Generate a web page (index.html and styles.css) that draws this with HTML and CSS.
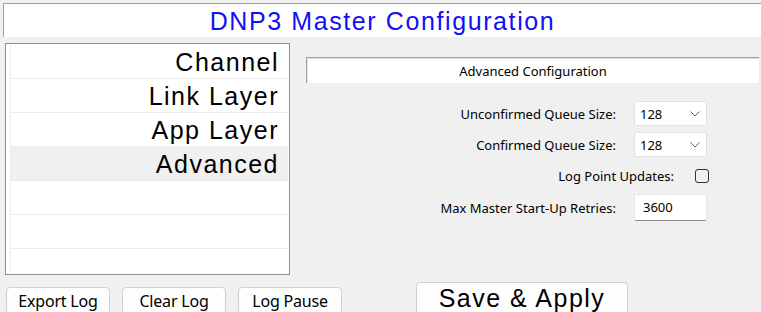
FILE: index.html
```html
<!DOCTYPE html>
<html lang="en">
<head>
    <meta charset="UTF-8">
    <meta name="viewport" content="width=device-width, initial-scale=1.0">
    <title>DNP3 Master Configuration</title>
    <link rel="stylesheet" href="styles.css">
</head>
<body>
    <div class="title-bar">DNP3 Master Configuration</div>
    <div class="content">
        <div class="nav-list">
            <div class="nav-item">Channel</div>
            <div class="nav-item">Link Layer</div>
            <div class="nav-item">App Layer</div>
            <div class="nav-item selected">Advanced</div>
            <div class="nav-item"></div>
            <div class="nav-item"></div>
            <div class="nav-item"></div>
        </div>
        <div class="config-panel">
            <div class="section-header">Advanced Configuration</div>
            <div class="form">
                <div class="form-row">
                    <label>Unconfirmed Queue Size:</label>
                    <div class="select"><span>128</span>
                        <svg width="10" height="6" viewBox="0 0 10 6"><path d="M0.5 0.5 L5 5 L9.5 0.5" fill="none" stroke="#606060" stroke-width="1"/></svg>
                    </div>
                </div>
                <div class="form-row">
                    <label>Confirmed Queue Size:</label>
                    <div class="select"><span>128</span>
                        <svg width="10" height="6" viewBox="0 0 10 6"><path d="M0.5 0.5 L5 5 L9.5 0.5" fill="none" stroke="#606060" stroke-width="1"/></svg>
                    </div>
                </div>
                <div class="form-row check-row">
                    <label>Log Point Updates:</label>
                    <div class="checkbox"></div>
                </div>
                <div class="form-row">
                    <label>Max Master Start-Up Retries:</label>
                    <div class="text-input">3600</div>
                </div>
            </div>
        </div>
    </div>
    <div class="actions">
        <button class="small-btn">Export Log</button>
        <button class="small-btn">Clear Log</button>
        <button class="small-btn">Log Pause</button>
        <button class="save-btn">Save &amp; Apply</button>
    </div>
</body>
</html>
```

FILE: styles.css
```css
body {
    margin: 0;
    width: 761px;
    height: 312px;
    overflow: hidden;
    background-color: #f0f0f0;
    font-family: "Noto Sans", sans-serif;
    font-size: 13px;
    color: #000;
}
.title-bar {
    margin: 3px 0 0 3px;
    height: 34px;
    line-height: 34px;
    box-sizing: border-box;
    border-top: 1px solid #a0a0a0;
    border-left: 1px solid #a0a0a0;
    background-color: #fff;
    text-align: center;
    font-family: "Liberation Sans", Arial, sans-serif;
    font-size: 25px;
    letter-spacing: 1.6px;
    color: #1010f5;
}
.content {
    display: flex;
    margin-top: 6px;
}
.nav-list {
    margin-left: 5px;
    width: 285px;
    height: 232px;
    box-sizing: border-box;
    border: 1px solid #8e9096;
    background-color: #fff;
    padding: 1px 1px 0 4px;
    overflow: hidden;
}
.nav-item {
    height: 33px;
    line-height: 34px;
    border-left: 1px solid #ececec;
    border-bottom: 1px solid #ececec;
    padding-right: 9px;
    text-align: right;
    font-family: "Liberation Sans", Arial, sans-serif;
    font-size: 25px;
    letter-spacing: 1.5px;
}
.nav-item.selected {
    background-color: #f0f0f0;
}
.config-panel {
    flex: 1;
    margin-left: 16px;
    padding-top: 14px;
}
.section-header {
    height: 26px;
    line-height: 26px;
    box-sizing: border-box;
    border-top: 1px solid #a0a0a0;
    border-left: 1px solid #a0a0a0;
    box-shadow: inset 1px 1px 0 #e3e3e3;
    background-color: #fff;
    margin-right: 2px;
    text-align: center;
}
.form {
    display: flex;
    flex-direction: column;
    gap: 6px;
    margin-top: 18px;
    padding-right: 54px;
}
.form-row {
    display: flex;
    justify-content: flex-end;
    align-items: center;
    gap: 18px;
    height: 25px;
}
.form-row label {
    white-space: nowrap;
}
.select {
    width: 73px;
    height: 25px;
    box-sizing: border-box;
    border: 1px solid #e2e2e2;
    border-radius: 2px;
    background-color: #fff;
    display: flex;
    align-items: center;
    justify-content: space-between;
    padding: 0 6px 0 5px;
}
.check-row {
    gap: 21px;
    height: 26px;
    margin-right: -2px;
}
.checkbox {
    width: 14px;
    height: 14px;
    box-sizing: border-box;
    border: 1px solid #333;
    border-radius: 3px;
}
.text-input {
    width: 73px;
    height: 27px;
    box-sizing: border-box;
    border: 1px solid #e6e6e6;
    border-bottom: 1px solid #8a8a8a;
    border-radius: 2px;
    background-color: #fff;
    padding: 3px 0 0 8px;
}
.actions {
    display: flex;
    align-items: flex-start;
    margin-top: 7px;
    padding-left: 6px;
}
button {
    cursor: pointer;
    background-color: #fdfdfd;
    border: 1px solid #d0d0d0;
    border-radius: 4px;
    color: #000;
}
.small-btn {
    width: 104px;
    height: 27px;
    margin-top: 5px;
    margin-right: 12px;
    padding: 0;
    font-family: "Noto Sans", sans-serif;
    font-size: 16px;
    letter-spacing: -0.2px;
}
.save-btn {
    width: 212px;
    height: 36px;
    margin-left: 62px;
    padding: 0 0 4px;
    font-family: "Liberation Sans", Arial, sans-serif;
    font-size: 25px;
    letter-spacing: 1.5px;
}
```
